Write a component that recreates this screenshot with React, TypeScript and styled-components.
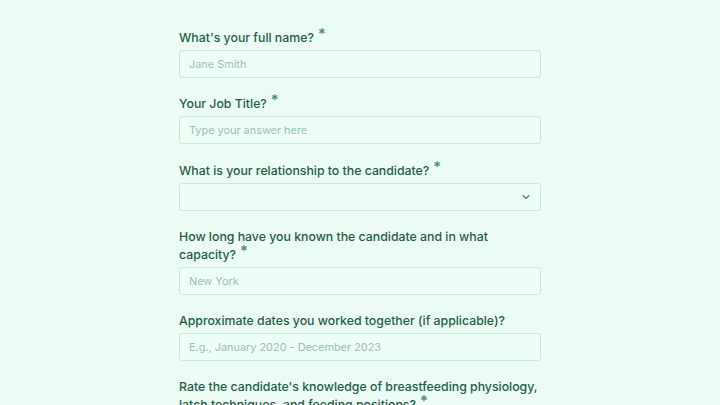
import React from "react";
import styled, { createGlobalStyle } from "styled-components";

const GlobalStyle = createGlobalStyle`
  html, body {
    margin: 0;
    padding: 0;
    background-color: #ecfcf5;
  }
  body {
    font-family: Inter, "Noto Sans", sans-serif;
  }
`;

interface Field {
  label: string;
  placeholder?: string;
  required?: boolean;
  select?: boolean;
}

const fields: Field[] = [
  { label: "What's your full name?", placeholder: "Jane Smith", required: true },
  { label: "Your Job Title?", placeholder: "Type your answer here", required: true },
  { label: "What is your relationship to the candidate?", required: true, select: true },
  {
    label: "How long have you known the candidate and in what capacity?",
    placeholder: "New York",
    required: true,
  },
  {
    label: "Approximate dates you worked together (if applicable)?",
    placeholder: "E.g., January 2020 - December 2023",
  },
  {
    label:
      "Rate the candidate's knowledge of breastfeeding physiology, latch techniques, and feeding positions?",
    required: true,
    placeholder: "",
  },
];

const App: React.FC = () => {
  return (
    <Page>
      <GlobalStyle />
      <Form>
        {fields.map((field) => (
          <Group key={field.label}>
            <Label>
              {field.label}
              {field.required && <Star>*</Star>}
            </Label>
            {field.select ? (
              <SelectBox>
                <svg width="12" height="12" viewBox="0 0 24 24" fill="none" stroke="#4f7f70" strokeWidth="2.2" strokeLinecap="round" strokeLinejoin="round">
                  <path d="M6 9l6 6 6-6" />
                </svg>
              </SelectBox>
            ) : (
              <Input type="text" placeholder={field.placeholder} />
            )}
          </Group>
        ))}
      </Form>
    </Page>
  );
};

export default App;

const Page = styled.div`
  display: flex;
  justify-content: center;
  padding-top: 28px;
  height: 377px;
  overflow: hidden;
`;

const Form = styled.form`
  width: 362px;
  display: flex;
  flex-direction: column;
  gap: 16.3px;
`;

const Group = styled.div`
  display: flex;
  flex-direction: column;
  gap: 3px;
`;

const Label = styled.label`
  padding-top: 1px;
  font-size: 12.3px;
  line-height: 18px;
  font-weight: 500;
  color: #1f5c4a;
`;

const Star = styled.span`
  display: inline-block;
  margin-left: 4px;
  font-size: 15px;
  line-height: 0;
  color: #4a8a74;
  vertical-align: 3px;
`;

const Input = styled.input`
  box-sizing: border-box;
  width: 100%;
  height: 28px;
  padding: 0 9px;
  font-family: Inter, "Noto Sans", sans-serif;
  font-size: 10.9px;
  color: #1f5c4a;
  background-color: #effdf7;
  border: 1px solid #c8eadb;
  border-radius: 3px;
  outline: none;
  &::placeholder {
    color: #9cbfb0;
  }
`;

const SelectBox = styled.div`
  box-sizing: border-box;
  width: 100%;
  height: 28px;
  padding: 0 8px;
  display: flex;
  align-items: center;
  justify-content: flex-end;
  background-color: #effdf7;
  border: 1px solid #c8eadb;
  border-radius: 3px;
`;
